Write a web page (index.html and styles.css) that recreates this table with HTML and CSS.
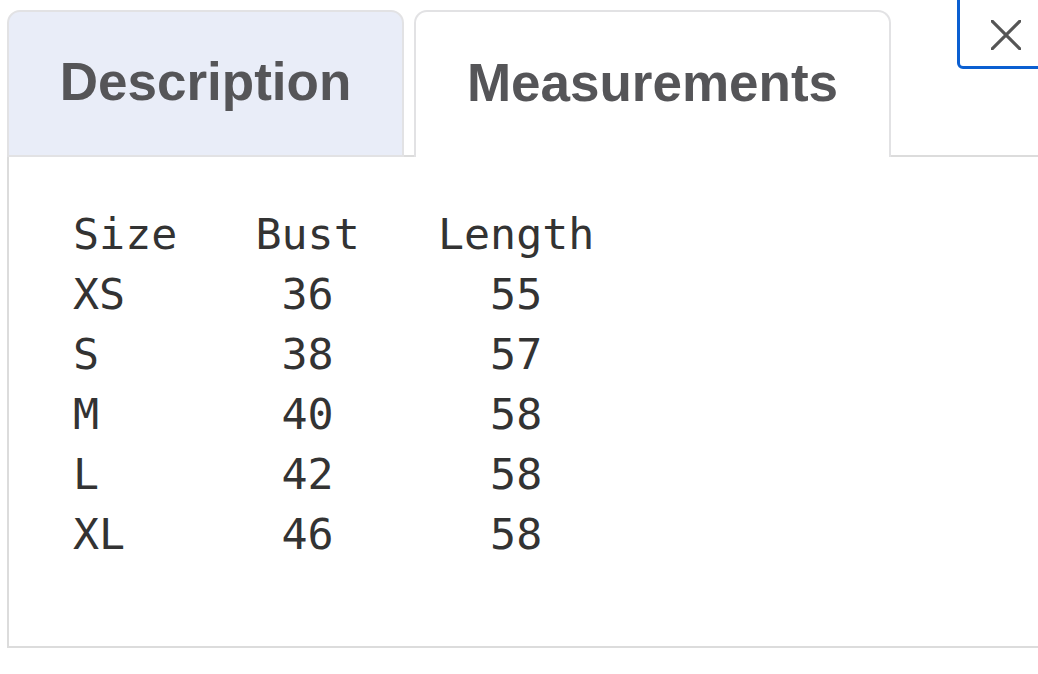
FILE: index.html
```html
<!DOCTYPE html>
<html lang="en">
<head>
<meta charset="utf-8">
<title>Measurements</title>
<link rel="stylesheet" href="styles.css">
</head>
<body>
<div class="wrap">
  <div class="tabs">
    <div class="tab tab-inactive">Description</div>
    <div class="tab tab-active">Measurements</div>
  </div>
  <div class="panel">
<pre class="sizes">Size   Bust   Length
XS      36      55
S       38      57
M       40      58
L       42      58
XL      46      58</pre>
  </div>
</div>
<button class="close" aria-label="Close">
  <svg class="close-icon" viewBox="0 0 30 30" width="30" height="30"><path d="M1 1 L29 29 M29 1 L1 29" stroke="#555" stroke-width="3.2" stroke-linecap="round" fill="none"/></svg>
</button>
</body>
</html>
```
FILE: styles.css
```css
html, body {
  margin: 0;
  padding: 0;
  background: #fff;
}
body {
  position: relative;
  width: 1038px;
  height: 674px;
  overflow: hidden;
}
.wrap {
  padding: 10px 0 0 7px;
}
.tabs {
  display: flex;
  gap: 10px;
  align-items: flex-end;
}
.tab {
  box-sizing: border-box;
  height: 147px;
  border: 2px solid #e2e2e4;
  border-bottom: none;
  border-radius: 13px 13px 0 0;
  display: flex;
  align-items: center;
  justify-content: center;
  padding-bottom: 4px;
  font-family: "Liberation Sans", Arial, sans-serif;
  font-weight: 700;
  font-size: 53px;
  color: #555558;
  margin-bottom: -2px;
}
.tab-inactive {
  width: 397px;
  background: #e9edf8;
  border-bottom: 2px solid #e2e2e4;
}
.tab-active {
  width: 477px;
  background: #fff;
  position: relative;
  z-index: 1;
}
.panel {
  box-sizing: border-box;
  height: 493px;
  border: 2px solid #dcdcdc;
  border-right: none;
  padding: 47px 0 0 64px;
}
.sizes {
  margin: 0;
  font-family: "DejaVu Sans Mono", Menlo, monospace;
  font-size: 43.3px;
  line-height: 60px;
  color: #333;
}
.close {
  position: absolute;
  left: 957px;
  top: -10px;
  width: 110px;
  height: 79px;
  box-sizing: border-box;
  border: 3px solid #0b5fd1;
  border-radius: 6px;
  background: #fff;
  padding: 0;
}
.close-icon {
  position: absolute;
  left: 31px;
  top: 27px;
}
```
